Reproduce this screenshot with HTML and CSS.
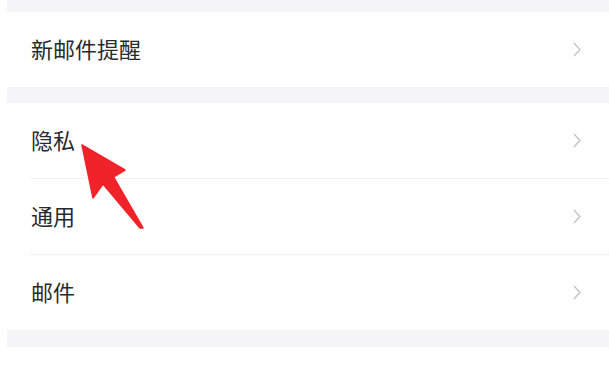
FILE: index.html
```html
<!DOCTYPE html>
<html lang="zh-CN">
<head>
<meta charset="utf-8">
<title>设置</title>
<link rel="stylesheet" href="styles.css">
</head>
<body>
<div class="page">
  <div class="list">
    <div class="group">
      <div class="row"><span class="label">新邮件提醒</span><svg class="chev" width="8" height="15" viewBox="0 0 8 15"><path d="M1 1 L7 7.5 L1 14" fill="none" stroke="#c4c4c4" stroke-width="1.4"/></svg></div>
    </div>
    <div class="group">
      <div class="row"><span class="label">隐私</span><svg class="chev" width="8" height="15" viewBox="0 0 8 15"><path d="M1 1 L7 7.5 L1 14" fill="none" stroke="#c4c4c4" stroke-width="1.4"/></svg></div>
      <div class="row"><span class="label">通用</span><svg class="chev" width="8" height="15" viewBox="0 0 8 15"><path d="M1 1 L7 7.5 L1 14" fill="none" stroke="#c4c4c4" stroke-width="1.4"/></svg></div>
      <div class="row"><span class="label">邮件</span><svg class="chev" width="8" height="15" viewBox="0 0 8 15"><path d="M1 1 L7 7.5 L1 14" fill="none" stroke="#c4c4c4" stroke-width="1.4"/></svg></div>
    </div>
  </div>
  <svg class="arrow" width="609" height="367" viewBox="0 0 609 367">
    <path d="M82 145 L125 170 L113.5 177 L143 228 L140 228 L103 184 L93 198 Z" fill="#f0232a" stroke="#f0232a" stroke-width="1.5" stroke-linejoin="round"/>
  </svg>
</div>
</body>
</html>
```
FILE: styles.css
```css
html, body {
  margin: 0;
  padding: 0;
  background: #ffffff;
}
.page {
  position: relative;
  width: 609px;
  height: 367px;
  overflow: hidden;
  font-family: "Noto Sans CJK SC", "Noto Sans", sans-serif;
}
.list {
  margin-left: 7px;
  background: #f5f5f7;
  padding-top: 12px;
  padding-bottom: 17px;
  display: flex;
  flex-direction: column;
  gap: 16px;
}
.group {
  background: #ffffff;
  display: flex;
  flex-direction: column;
}
.row {
  height: 75px;
  box-sizing: border-box;
  display: flex;
  align-items: center;
  justify-content: space-between;
  padding: 0 28px 0 24px;
  position: relative;
}
.row + .row {
  height: 76px;
  padding-top: 1px;
}
.row + .row::before {
  content: "";
  position: absolute;
  top: 0;
  left: 23px;
  right: 0;
  height: 1px;
  background: #f0f0f2;
}
.label {
  font-size: 22px;
  color: #2a2a2a;
  line-height: 1;
  margin-top: -4px;
}
.chev {
  display: block;
}
.arrow {
  position: absolute;
  left: 0;
  top: 0;
  pointer-events: none;
}
```
